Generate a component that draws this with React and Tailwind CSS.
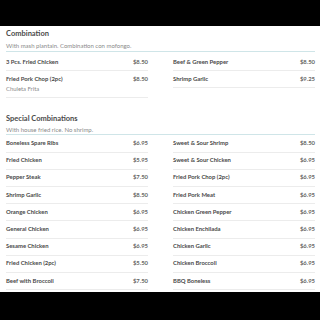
export default function App() {
  const s1L = [
    { n: "3 Pcs. Fried Chicken", p: "$8.50" },
    { n: "Fried Pork Chop (2pc)", p: "$8.50", sub: "Chuleta Frita" },
  ];
  const s1R = [
    { n: "Beef & Green Pepper", p: "$8.50" },
    { n: "Shrimp Garlic", p: "$9.25" },
  ];
  const s2L = [
    ["Boneless Spare Ribs", "$6.95"],
    ["Fried Chicken", "$5.95"],
    ["Pepper Steak", "$7.50"],
    ["Shrimp Garlic", "$8.50"],
    ["Orange Chicken", "$6.95"],
    ["General Chicken", "$6.95"],
    ["Sesame Chicken", "$6.95"],
    ["Fried Chicken (2pc)", "$5.50"],
    ["Beef with Broccoli", "$7.50"],
  ];
  const s2R = [
    ["Sweet & Sour Shrimp", "$8.50"],
    ["Sweet & Sour Chicken", "$6.95"],
    ["Fried Pork Chop (2pc)", "$6.95"],
    ["Fried Pork Meat", "$6.95"],
    ["Chicken Green Pepper", "$6.95"],
    ["Chicken Enchilada", "$6.95"],
    ["Chicken Garlic", "$6.95"],
    ["Chicken Broccoli", "$6.95"],
    ["BBQ Boneless", "$6.95"],
  ];
  const Row = ({ n, p, sub }) => (
    <div className="border-b border-[#ececec]">
      <div className="flex h-[16.2px] items-center justify-between">
        <span className="text-[5.9px] font-bold text-[#4a4a4a]">{n}</span>
        <span className="text-[5.9px] font-bold text-[#666]">{p}</span>
      </div>
      {sub && <div className="-mt-[3px] pb-[3px] text-[5.9px] text-[#8a8a8a] leading-[10px]">{sub}</div>}
    </div>
  );
  return (
    <div className="w-[320px] h-[320px] bg-black flex flex-col" style={{ fontFamily: "Lato, sans-serif" }}>
      <div className="h-[26px]" />
      <div className="h-[266px] bg-white pl-[6px] pr-[5px]">
        <div className="pt-[3px]">
          <div className="text-[7.5px] font-bold text-[#4a4a4a] leading-[10px]">Combination</div>
          <div className="mt-[2px] pb-[1px] text-[6px] text-[#8a8a8a] leading-[9px]">With mash plantain. Combination con mofongo.</div>
          <div className="h-[1px] bg-[#cfe5e8]" />
          <div className="grid grid-cols-2 gap-x-[25px] pt-[2px]">
            <div>{s1L.map((r) => <Row key={r.n} {...r} />)}</div>
            <div>{s1R.map((r) => <Row key={r.n} {...r} />)}</div>
          </div>
        </div>
        <div className="pt-[16px]">
          <div className="text-[7.5px] font-bold text-[#4a4a4a] leading-[10px]">Special Combinations</div>
          <div className="mt-[2px] text-[6px] text-[#8a8a8a] leading-[8px]">With house fried rice. No shrimp.</div>
          <div className="h-[1px] bg-[#cfe5e8]" />
          <div className="grid grid-cols-2 gap-x-[25px]">
            <div>{s2L.map(([n, p]) => <Row key={n} n={n} p={p} />)}</div>
            <div>{s2R.map(([n, p]) => <Row key={n} n={n} p={p} />)}</div>
          </div>
        </div>
      </div>
    </div>
  );
}
